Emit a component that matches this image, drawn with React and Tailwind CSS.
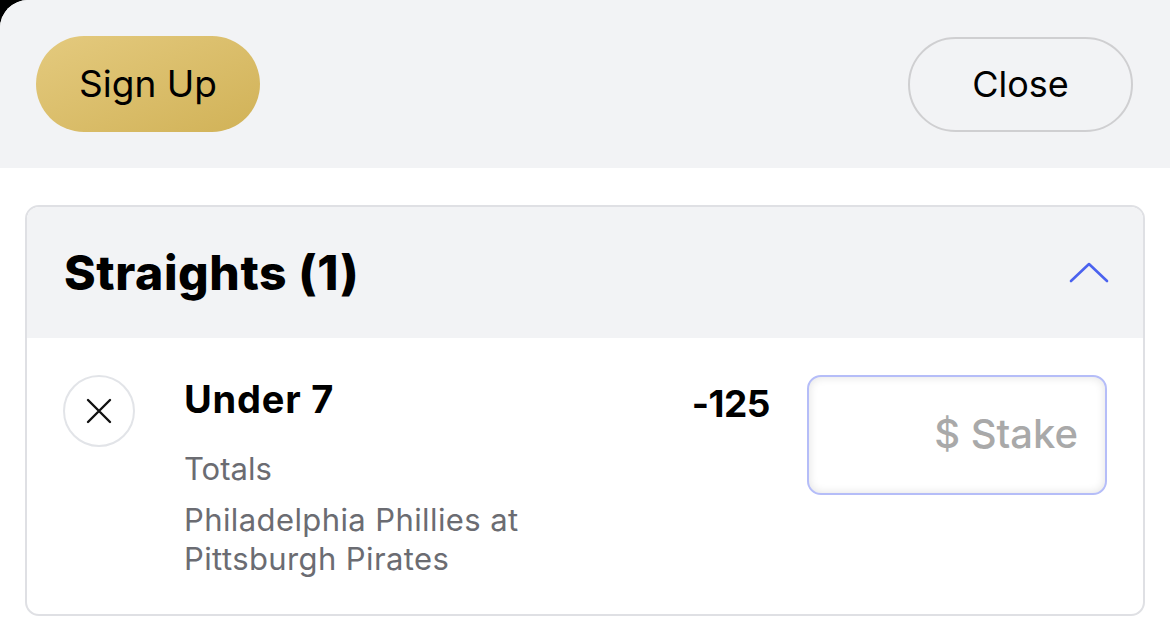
const App = () => {
  return (
    <div className="h-[637px] w-[1170px] overflow-hidden bg-black font-['Inter',sans-serif]">
      <div className="h-full w-full overflow-hidden rounded-tl-[28px] bg-white">
        <div className="flex h-[168px] items-center justify-between bg-[#f2f3f5] px-9">
          <button className="flex h-[96px] w-[224px] items-center justify-center rounded-full bg-gradient-to-br from-[#e4ca7e] to-[#d1b257] text-[37px] text-black">
            Sign Up
          </button>
          <button className="mr-[1px] flex h-[95px] w-[225px] items-center justify-center rounded-full border-2 border-[#cfcfd1] text-[36px] text-black">
            Close
          </button>
        </div>

        <div className="mx-[25px] mt-[37px] overflow-hidden rounded-[14px] border-2 border-[#dfe0e4]">
          <div className="flex h-[131px] items-center justify-between bg-[#f2f3f5] pl-[37px] pr-[34px]">
            <h2 className="text-[48px] font-extrabold tracking-[0.6px] text-black">
              Straights (1)
            </h2>
            <svg width="40" height="24" viewBox="0 0 40 24" fill="none">
              <path
                d="M2 20 L20 3 L38 20"
                stroke="#4b62ef"
                strokeWidth="2.6"
                strokeLinecap="round"
                strokeLinejoin="round"
              />
            </svg>
          </div>

          <div className="flex h-[276px] pl-[36px] pr-[36px] pt-[37px]">
            <div className="flex h-[72px] w-[72px] shrink-0 items-center justify-center rounded-full border-2 border-[#e2e4e8]">
              <svg width="28" height="28" viewBox="0 0 28 28">
                <path
                  d="M3 3 L25 25 M25 3 L3 25"
                  stroke="#111"
                  strokeWidth="2.4"
                  strokeLinecap="round"
                />
              </svg>
            </div>
            <div className="ml-[49px] flex-1">
              <div className="text-[38px] font-bold leading-[48px] tracking-[0.8px] text-black">
                Under 7
              </div>
              <div className="mt-[26px] text-[31px] leading-[40px] text-[#6b6c72]">
                Totals
              </div>
              <div className="mt-[11px] w-[380px] text-[31px] leading-[39px] tracking-[0.4px] text-[#6b6c72]">
                Philadelphia Phillies at Pittsburgh Pirates
              </div>
            </div>
            <div className="mr-[37px] pt-[7px] text-[37px] font-bold leading-[44px] tracking-[-0.5px] text-black">
              -125
            </div>
            <div className="flex h-[120px] w-[300px] items-center justify-end rounded-[14px] border-2 border-[#b5bdf8] bg-white pb-[2px] pr-[27px] shadow-[inset_0_0_10px_rgba(0,0,0,0.12)]">
              <span className="text-[40px] font-medium text-[#a9a9a9]">
                $ Stake
              </span>
            </div>
          </div>
        </div>
      </div>
    </div>
  );
};

export default App;
